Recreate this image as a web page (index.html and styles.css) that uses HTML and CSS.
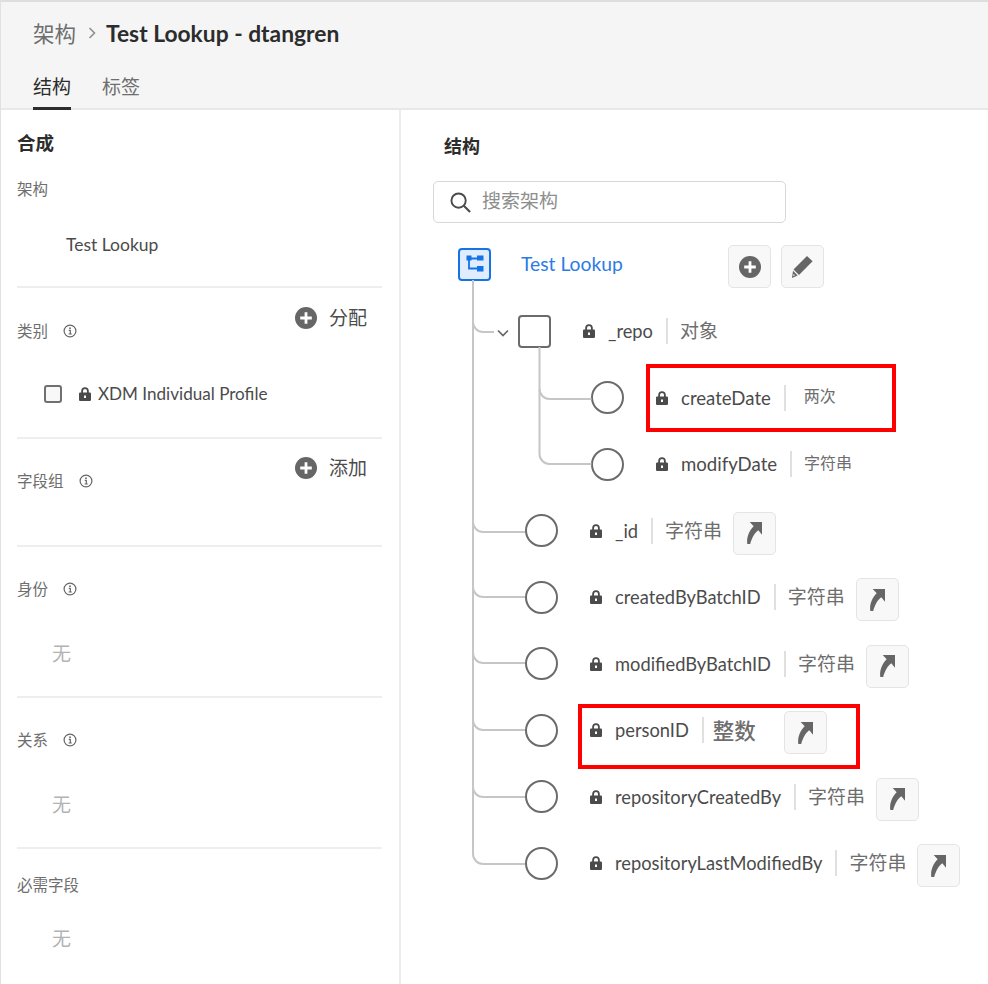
FILE: index.html
```html
<!DOCTYPE html>
<html>
<head>
<meta charset="UTF-8">
<meta name="viewport" content="width=device-width, initial-scale=1.0">
<title>Test Lookup</title>
<link rel="stylesheet" href="styles.css">
</head>
<body>

<svg class="defs" width="0" height="0">
  <symbol id="lock" viewBox="0 0 12 14"><path fill="#4b4b4b" fill-rule="evenodd" d="M2.200 5.600V4a3.800 3.800 0 0 1 7.600 0v1.600h.9c.7 0 1.300.5 1.300 1.200v5.900c0 .7-.6 1.300-1.300 1.300H1.300C.6 14 0 13.400 0 12.700V6.800c0-.7.6-1.200 1.300-1.200zM4 5.600h4V4a2 2 0 0 0-4 0zM5 8.500v2.600h2V8.500z"/></symbol>
  <symbol id="plus" viewBox="0 0 22 22"><circle cx="11" cy="11" r="11" fill="#666"/><path d="M11 5.200v11.600M5.200 11h11.600" stroke="#fff" stroke-width="2.800" fill="none"/></symbol>
  <symbol id="info" viewBox="0 0 14 14"><circle cx="7" cy="7" r="5.900" fill="none" stroke="#666" stroke-width="1.200"/><path d="M5.800 6.300h1.500v3.500M5.600 10h3.200" fill="none" stroke="#666" stroke-width="1.200"/><circle cx="7" cy="4.200" r=".9" fill="#666"/></symbol>
  <symbol id="jump" viewBox="0 0 15 22"><path fill="#666" d="M2.700 0H15v12.700L11.300 8.300C8 10.500 5 15.500 3.200 22H.3C-.6 15.500 2 9 6.700 4.300z"/></symbol>
</svg>

<div class="app">
  <header class="top">
    <div class="crumbs">
      <span class="crumb">架构</span>
      <svg class="crumb-sep" width="8" height="12" viewBox="0 0 8 12"><path d="M1.500 1l5 5-5 5" fill="none" stroke="#8e8e8e" stroke-width="1.600"/></svg>
      <span class="crumb-title">Test Lookup - dtangren</span>
    </div>
    <nav class="tabs">
      <a class="tab tab-on">结构</a>
      <a class="tab">标签</a>
    </nav>
  </header>

  <div class="body">
    <aside class="rail">
      <section class="sec sec-schema">
        <h2 class="rail-title">合成</h2>
        <div class="label label-schema">架构</div>
        <div class="schema-name">Test Lookup</div>
      </section>

      <section class="sec sec-class">
        <div class="sec-head">
          <div class="label label-head">类别 <svg class="info"><use href="#info"/></svg></div>
          <a class="action"><svg class="action-icon"><use href="#plus"/></svg>分配</a>
        </div>
        <div class="class-row">
          <span class="check"></span>
          <svg class="lock"><use href="#lock"/></svg>
          <span>XDM Individual Profile</span>
        </div>
      </section>

      <section class="sec sec-groups">
        <div class="sec-head">
          <div class="label label-head">字段组 <svg class="info"><use href="#info"/></svg></div>
          <a class="action"><svg class="action-icon"><use href="#plus"/></svg>添加</a>
        </div>
      </section>

      <section class="sec sec-none">
        <div class="label label-head">身份 <svg class="info"><use href="#info"/></svg></div>
        <div class="none">无</div>
      </section>

      <section class="sec sec-none">
        <div class="label label-head">关系 <svg class="info"><use href="#info"/></svg></div>
        <div class="none">无</div>
      </section>

      <section class="sec sec-last">
        <div class="label label-head">必需字段</div>
        <div class="none">无</div>
      </section>
    </aside>

    <main class="panel">
      <h2 class="panel-title">结构</h2>
      <div class="search">
        <svg width="21" height="21" viewBox="0 0 22 22"><circle cx="9" cy="9" r="7.500" fill="none" stroke="#4b4b4b" stroke-width="2"/><path d="M14.500 14.500l6.500 6.500" stroke="#4b4b4b" stroke-width="2.200"/></svg>
        <span class="search-text">搜索架构</span>
      </div>

      <div class="tree">
        <!-- connectors, coordinates are relative to .tree -->
        <svg class="wires" width="560" height="660" viewBox="0 0 560 660">
          <g fill="none" stroke="#c6c6c6" stroke-width="2">
            <path d="M73 35V609a10 10 0 0 0 10 10h42"/>
            <path d="M73 77a10 10 0 0 0 10 10h11"/>
            <path d="M73 277a10 10 0 0 0 10 10h42"/>
            <path d="M73 342a10 10 0 0 0 10 10h42"/>
            <path d="M73 408a10 10 0 0 0 10 10h42"/>
            <path d="M73 475a10 10 0 0 0 10 10h42"/>
            <path d="M73 542a10 10 0 0 0 10 10h42"/>
            <path d="M139.500 102V209a10 10 0 0 0 10 10h42"/>
            <path d="M139.500 144a10 10 0 0 0 10 10h42"/>
          </g>
        </svg>

        <div class="root">
          <span class="root-node">
            <svg width="18" height="18" viewBox="0 0 18 18"><path d="M3 4v9.500h8M5 3.500h8" fill="none" stroke="#1473e6" stroke-width="1.800"/><rect x="0.500" y="0.500" width="5" height="5" fill="#1473e6"/><rect x="11" y="0.500" width="6.500" height="5" fill="#1473e6"/><rect x="11" y="11" width="6.500" height="5.500" fill="#1473e6"/></svg>
          </span>
          <span class="root-name">Test Lookup</span>
          <a class="btn btn-add"><svg class="btn-plus"><use href="#plus"/></svg></a>
          <a class="btn"><svg width="21" height="22" viewBox="0 0 21 22"><path fill="#666" d="M15 0l5.600 5.300L7 19l-5.500-5.500z"/><path fill="#666" d="M1 14.800L5.700 19.500 0 22z"/><path fill="#fff" d="M1.700 18l1.300 1.300-1.900.7z"/></svg></a>
        </div>

        <div class="row lvl-repo">
          <svg class="chev" width="12" height="8" viewBox="0 0 12 8"><path d="M1 1.500l5 5 5-5" fill="none" stroke="#666" stroke-width="1.700"/></svg>
          <span class="node node-obj"></span>
          <svg class="lock"><use href="#lock"/></svg>
          <span class="name">_repo</span>
          <span class="type">对象</span>
        </div>

        <div class="row lvl-2">
          <span class="node"></span>
          <svg class="lock"><use href="#lock"/></svg>
          <span class="name name-date">createDate</span>
          <span class="type type-small type-date">两次</span>
        </div>
        <div class="row lvl-2">
          <span class="node"></span>
          <svg class="lock"><use href="#lock"/></svg>
          <span class="name name-date">modifyDate</span>
          <span class="type type-small">字符串</span>
        </div>

        <div class="row lvl-1">
          <span class="node"></span>
          <svg class="lock"><use href="#lock"/></svg>
          <span class="name">_id</span>
          <span class="type">字符串</span>
          <a class="btn"><svg class="jump"><use href="#jump"/></svg></a>
        </div>
        <div class="row lvl-1">
          <span class="node"></span>
          <svg class="lock"><use href="#lock"/></svg>
          <span class="name">createdByBatchID</span>
          <span class="type">字符串</span>
          <a class="btn"><svg class="jump"><use href="#jump"/></svg></a>
        </div>
        <div class="row lvl-1">
          <span class="node"></span>
          <svg class="lock"><use href="#lock"/></svg>
          <span class="name">modifiedByBatchID</span>
          <span class="type">字符串</span>
          <a class="btn"><svg class="jump"><use href="#jump"/></svg></a>
        </div>
        <div class="row lvl-1">
          <span class="node"></span>
          <svg class="lock"><use href="#lock"/></svg>
          <span class="name">personID</span>
          <span class="type type-int">整数</span>
          <a class="btn"><svg class="jump"><use href="#jump"/></svg></a>
        </div>
        <div class="row lvl-1">
          <span class="node"></span>
          <svg class="lock"><use href="#lock"/></svg>
          <span class="name">repositoryCreatedBy</span>
          <span class="type">字符串</span>
          <a class="btn"><svg class="jump"><use href="#jump"/></svg></a>
        </div>
        <div class="row lvl-1">
          <span class="node"></span>
          <svg class="lock"><use href="#lock"/></svg>
          <span class="name">repositoryLastModifiedBy</span>
          <span class="type">字符串</span>
          <a class="btn"><svg class="jump"><use href="#jump"/></svg></a>
        </div>

        <div class="mark mark-date"></div>
        <div class="mark mark-person"></div>
      </div>
    </main>
  </div>
</div>

</body>
</html>
```

FILE: styles.css
```css
body {
    margin: 0;
    padding: 0;
    background: #fff;
    color: #4b4b4b;
    font-family: Lato, "Noto Sans CJK SC", sans-serif;
}

.defs {
    position: absolute;
}

.app {
    width: 988px;
    height: 984px;
    overflow: hidden;
    box-sizing: border-box;
    border-left: 1px solid #e1e1e1;
}

/* top bar */
.top {
    height: 110px;
    box-sizing: border-box;
    background: #f5f5f5;
    border-top: 2px solid #dedede;
    border-bottom: 2px solid #e8e8e8;
    padding: 15px 0 0 32px;
}
.crumbs {
    display: flex;
    align-items: center;
    height: 32px;
}
.crumb {
    font-size: 21.500px;
    color: #6e6e6e;
    margin-bottom: 2px;
}
.crumb-sep {
    margin: 0 10px 0 12px;
}
.crumb-title {
    font-size: 22.800px;
    font-weight: 700;
    color: #2c2c2c;
}
.tabs {
    display: flex;
    gap: 31px;
    margin-top: 12px;
}
.tab {
    font-size: 19px;
    line-height: 28px;
    height: 49px;
    padding-top: 12px;
    box-sizing: border-box;
    color: #6e6e6e;
}
.tab-on {
    color: #2c2c2c;
    border-bottom: 3px solid #2c2c2c;
}

.body {
    display: flex;
}

/* left rail */
.rail {
    width: 400px;
    height: 874px;
    box-sizing: border-box;
    flex: none;
    border-right: 2px solid #ececec;
    padding: 0 17px 0 16px;
}
.sec {
    box-sizing: border-box;
    border-bottom: 2px solid #eeeeee;
}
.sec-schema { height: 178px; }
.sec-class { height: 151px; }
.sec-groups { height: 108px; }
.sec-none { height: 151px; }
.sec-last { border-bottom: 0; }

.rail-title {
    margin: 0;
    padding-top: 21px;
    font-size: 18.500px;
    line-height: 24px;
    font-weight: 700;
    color: #2c2c2c;
}
.label {
    display: flex;
    align-items: center;
    gap: 15px;
    font-size: 15.500px;
    line-height: 24px;
    color: #6e6e6e;
}
.label-schema {
    margin-top: 22px;
}
.label-head {
    padding-top: 31px;
}
.sec-groups .label-head,
.sec-none .label-head {
    padding-top: 30px;
}
.sec-last .label-head {
    padding-top: 24px;
}
.schema-name {
    margin: 32px 0 0 49px;
    font-size: 17.500px;
    line-height: 24px;
    color: #4b4b4b;
}
.info {
    width: 14px;
    height: 14px;
}
.sec-head {
    display: flex;
    justify-content: space-between;
    align-items: flex-start;
}
.action {
    display: flex;
    align-items: center;
    gap: 12px;
    margin: 15px 15px 0 0;
    font-size: 19px;
    line-height: 30px;
    color: #4b4b4b;
}
.sec-groups .action {
    margin-top: 14px;
}
.action-icon {
    width: 22px;
    height: 22px;
}
.class-row {
    display: flex;
    align-items: center;
    margin: 39px 0 0 27px;
    font-size: 17.100px;
    line-height: 24px;
}
.check {
    width: 18px;
    height: 18px;
    box-sizing: border-box;
    border: 2px solid #707070;
    border-radius: 3px;
    background: #f8f8f8;
    margin-right: 17px;
}
.lock {
    width: 12px;
    height: 14px;
    flex: none;
}
.class-row .lock {
    margin-right: 7px;
}
.none {
    margin: 41px 0 0 35px;
    font-size: 19px;
    line-height: 24px;
    color: #b3b3b3;
}
.sec-last .none {
    margin-top: 30px;
}

/* schema tree */
.panel {
    flex: 1;
    padding: 0 0 0 32px;
}
.panel-title {
    margin: 0;
    padding: 24px 0 0 11px;
    font-size: 18px;
    line-height: 24px;
    font-weight: 700;
    color: #2c2c2c;
}
.search {
    display: flex;
    align-items: center;
    gap: 11px;
    width: 353px;
    height: 42px;
    box-sizing: border-box;
    margin-top: 23px;
    padding-left: 16px;
    border: 1px solid #d8d8d8;
    border-radius: 5px;
    font-size: 19px;
    color: #8e8e8e;
}
.search-text {
    margin-bottom: 6px;
}
.tree {
    position: relative;
    margin-top: 22px;
    margin-left: -33px;
}
.wires {
    position: absolute;
    left: 0;
    top: 0;
    pointer-events: none;
}
.root {
    display: flex;
    align-items: center;
    height: 43px;
    padding-left: 58px;
}
.root-node {
    display: flex;
    align-items: center;
    justify-content: center;
    width: 33px;
    height: 33px;
    box-sizing: border-box;
    margin-top: -5px;
    border: 2px solid #1473e6;
    border-radius: 4px;
    background: #e1ecfc;
}
.root-name {
    margin: -7px 105px 0 30px;
    width: 102px;
    font-size: 19.300px;
    white-space: nowrap;
    color: #2c7be5;
}
.btn {
    display: flex;
    align-items: center;
    justify-content: center;
    flex: none;
    width: 43px;
    height: 43px;
    box-sizing: border-box;
    border: 1px solid #e4e4e4;
    border-radius: 5px;
    background: #f8f8f8;
}
.btn-add {
    margin-right: 10px;
}
.btn-plus {
    width: 22px;
    height: 22px;
}
.jump {
    width: 15px;
    height: 22px;
}
.row {
    display: flex;
    align-items: center;
    height: 66.500px;
    font-size: 18.300px;
}
.row .btn {
    margin-top: 5px;
}
.lvl-repo {
    margin-top: 10px;
    padding-left: 97px;
}
.lvl-1 {
    padding-left: 125px;
}
.lvl-2 {
    padding-left: 191px;
}
.chev {
    margin-right: 9px;
    margin-top: 4px;
}
.node {
    width: 33px;
    height: 33px;
    flex: none;
    box-sizing: border-box;
    border: 2px solid #6b6b6b;
    border-radius: 50%;
    background: #fff;
    margin-right: 32px;
}
.node-obj {
    border-radius: 4px;
}
.name {
    margin-left: 13px;
    padding-right: 13px;
    line-height: 26px;
    color: #4b4b4b;
}
.name-date {
    font-size: 18.600px;
}
.type {
    border-left: 2px solid #e0e0e0;
    padding-left: 12px;
    margin-right: 11px;
    font-size: 19px;
    height: 26px;
    line-height: 26px;
    color: #6e6e6e;
}
.type-small {
    font-size: 16px;
    line-height: 23px;
}
.type-date {
    padding-left: 18px;
    line-height: 21px;
}
.type-int {
    padding-left: 9px;
    margin-right: 28px;
    font-size: 21.500px;
    line-height: 28px;
    font-weight: 500;
}
.mark {
    position: absolute;
    box-sizing: border-box;
    border: 4px solid #ff0000;
}
.mark-date {
    left: 246px;
    top: 119px;
    width: 250px;
    height: 68px;
}
.mark-person {
    left: 178px;
    top: 459px;
    width: 282px;
    height: 65px;
}
```
